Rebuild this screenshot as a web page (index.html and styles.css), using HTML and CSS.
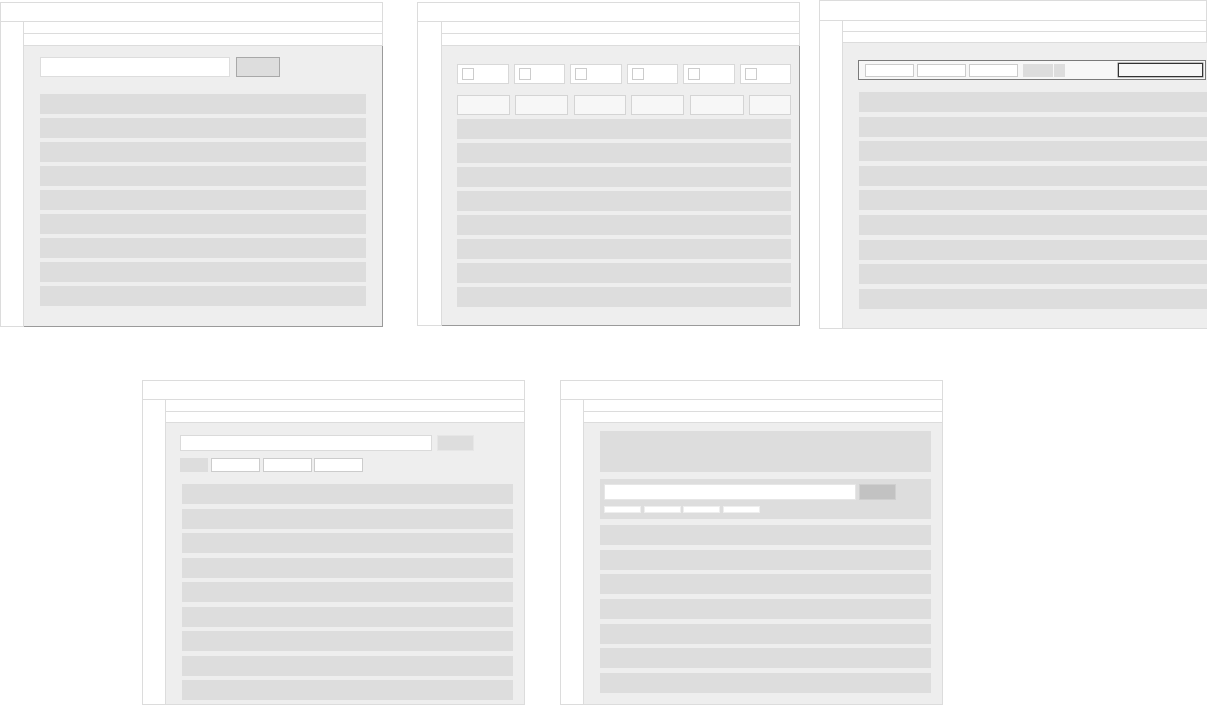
FILE: index.html
```html
<!DOCTYPE html>
<html>
<head>
<meta charset="utf-8">
<title>Wireframes</title>
<link rel="stylesheet" href="styles.css">
</head>
<body>
<div class="page">
  <div class="row-top">
    <!-- Frame 1 -->
    <div class="frame f1">
      <div class="hdr"></div>
      <div class="body">
        <div class="side"></div>
        <div class="main">
          <div class="sub"></div>
          <div class="sub"></div>
          <div class="content c1">
            <div class="search1">
              <div class="input1"></div>
              <div class="btn1"></div>
            </div>
            <div class="rows r1">
              <div class="r"></div><div class="r"></div><div class="r"></div>
              <div class="r"></div><div class="r"></div><div class="r"></div>
              <div class="r"></div><div class="r"></div><div class="r"></div>
            </div>
          </div>
        </div>
      </div>
    </div>
    <!-- Frame 2 -->
    <div class="frame f2">
      <div class="hdr"></div>
      <div class="body">
        <div class="side side2"></div>
        <div class="main">
          <div class="sub"></div>
          <div class="sub"></div>
          <div class="content c2">
            <div class="checks">
              <div class="chk"><span class="box"></span></div>
              <div class="chk"><span class="box"></span></div>
              <div class="chk"><span class="box"></span></div>
              <div class="chk"><span class="box"></span></div>
              <div class="chk"><span class="box"></span></div>
              <div class="chk"><span class="box"></span></div>
            </div>
            <div class="thead">
              <div class="th w53"></div>
              <div class="th w53"></div>
              <div class="th w52"></div>
              <div class="th w53"></div>
              <div class="th w54"></div>
              <div class="th w42"></div>
            </div>
            <div class="rows r2">
              <div class="r"></div><div class="r"></div><div class="r"></div><div class="r"></div>
              <div class="r"></div><div class="r"></div><div class="r"></div><div class="r"></div>
            </div>
          </div>
        </div>
      </div>
    </div>
    <!-- Frame 3 -->
    <div class="frame f3">
      <div class="hdr"></div>
      <div class="body">
        <div class="side"></div>
        <div class="main">
          <div class="sub"></div>
          <div class="sub"></div>
          <div class="content c3">
            <div class="toolbar">
              <div class="tb-in"></div>
              <div class="tb-in"></div>
              <div class="tb-in"></div>
              <div class="tb-gray"></div>
              <div class="tb-gray-sm"></div>
              <div class="tb-box"></div>
            </div>
            <div class="rows r3">
              <div class="r"></div><div class="r"></div><div class="r"></div>
              <div class="r"></div><div class="r"></div><div class="r"></div>
              <div class="r"></div><div class="r"></div><div class="r"></div>
            </div>
          </div>
        </div>
      </div>
    </div>
  </div>

  <div class="row-bottom">
    <!-- Frame 4 -->
    <div class="frame f4">
      <div class="hdr"></div>
      <div class="body">
        <div class="side"></div>
        <div class="main">
          <div class="sub"></div>
          <div class="sub sub-b"></div>
          <div class="content c4">
            <div class="search4">
              <div class="input4"></div>
              <div class="btn4"></div>
            </div>
            <div class="tabs">
              <div class="tab-gray"></div>
              <div class="tab"></div>
              <div class="tab"></div>
              <div class="tab"></div>
            </div>
            <div class="rows r4">
              <div class="r"></div><div class="r"></div><div class="r"></div>
              <div class="r"></div><div class="r"></div><div class="r"></div>
              <div class="r"></div><div class="r"></div><div class="r"></div>
            </div>
          </div>
        </div>
      </div>
    </div>
    <!-- Frame 5 -->
    <div class="frame f5">
      <div class="hdr"></div>
      <div class="body">
        <div class="side"></div>
        <div class="main">
          <div class="sub"></div>
          <div class="sub sub-b"></div>
          <div class="content c5">
            <div class="banner"></div>
            <div class="panel">
              <div class="panel-search">
                <div class="input5"></div>
                <div class="btn5"></div>
              </div>
              <div class="chips">
                <div class="chip"></div>
                <div class="chip"></div>
                <div class="chip"></div>
                <div class="chip"></div>
              </div>
            </div>
            <div class="rows r5">
              <div class="r"></div><div class="r"></div><div class="r"></div>
              <div class="r"></div><div class="r"></div><div class="r"></div>
              <div class="r"></div>
            </div>
          </div>
        </div>
      </div>
    </div>
  </div>
</div>
</body>
</html>
```

FILE: styles.css
```css
* { box-sizing: border-box; }

html, body {
  margin: 0;
  padding: 0;
  background: #ffffff;
  font-family: "Liberation Sans", Arial, sans-serif;
}

.page {
  width: 1207px;
  height: 706px;
  overflow: hidden;
}

.row-top {
  display: flex;
  align-items: flex-start;
  height: 329px;
}

.row-bottom {
  display: flex;
  align-items: flex-start;
  margin-top: 51px;
  padding-left: 142px;
  gap: 35px;
}

/* frame skeleton */
.frame {
  display: flex;
  flex-direction: column;
  flex: none;
}

.f1 { width: 383px; height: 325px; margin-top: 2px; }
.f2 { width: 383px; height: 324px; margin-top: 2px; margin-left: 34px; }
.f3 { width: 388px; height: 329px; margin-left: 19px; }
.f4 { width: 383px; height: 325px; }
.f5 { width: 383px; height: 325px; }

.hdr {
  height: 20px;
  flex: none;
  background: #fff;
  border: 1px solid #dcdcdc;
}
.f3 .hdr { height: 21px; }

.body {
  flex: 1;
  display: flex;
  min-height: 0;
}

.side {
  width: 24px;
  flex: none;
  background: #fff;
  border: 1px solid #dcdcdc;
  border-top: none;
}
.side2 { width: 25px; }

.main {
  flex: 1;
  display: flex;
  flex-direction: column;
  min-width: 0;
}

.sub {
  height: 12px;
  flex: none;
  background: #fff;
  border: 1px solid #dcdcdc;
  border-top: none;
  border-left: none;
}
.f3 .sub { height: 11px; }
.sub-b { height: 11px; }

.content {
  flex: 1;
  background: #eeeeee;
  min-height: 0;
  overflow: hidden;
  border-right: 1px solid #dcdcdc;
  border-bottom: 1px solid #dcdcdc;
}

.c1, .c2 {
  border-right: 1px solid #9a9a9a;
  border-bottom: 1px solid #9a9a9a;
}

/* list rows */
.rows {
  display: flex;
  flex-direction: column;
}
.r {
  height: 20px;
  flex: none;
  background: #dddddd;
}

/* ---------- Frame 1 ---------- */
.c1 { padding: 11px 16px 0 16px; }
.search1 { display: flex; gap: 6px; }
.input1 {
  width: 190px;
  height: 20px;
  background: #fff;
  border: 1px solid #dddddd;
}
.btn1 {
  width: 44px;
  height: 20px;
  background: #dddddd;
  border: 1px solid #a8a8a8;
}
.r1 { margin-top: 17px; gap: 4px; width: 326px; }

/* ---------- Frame 2 ---------- */
.c2 { padding: 18px 0 0 15px; }
.checks {
  display: grid;
  grid-template-columns: repeat(6, 1fr);
  column-gap: 5px;
  width: 334px;
}
.chk {
  height: 20px;
  background: #fff;
  border: 1px solid #d8d8d8;
  display: flex;
  align-items: center;
  padding-left: 4px;
}
.box {
  width: 12px;
  height: 12px;
  border: 1px solid #cccccc;
  background: #fff;
}
.thead {
  display: flex;
  justify-content: space-between;
  width: 334px;
  margin-top: 11px;
}
.th {
  height: 20px;
  background: #f7f7f7;
  border: 1px solid #d4d4d4;
}
.w53 { width: 53px; }
.w52 { width: 52px; }
.w54 { width: 54px; }
.w42 { width: 42px; }
.r2 { margin-top: 4px; gap: 4px; width: 334px; }

/* ---------- Frame 3 ---------- */
.c3 { padding: 17px 0 0 15px; border-right: none; }
.toolbar {
  display: flex;
  align-items: center;
  width: 348px;
  height: 20px;
  background: #f7f7f7;
  border: 1px solid #7a7a7a;
  padding-left: 6px;
  padding-right: 2px;
}
.tb-in {
  width: 49px;
  height: 13px;
  background: #fff;
  border: 1px solid #cccccc;
  margin-right: 3px;
}
.tb-in:nth-child(3) { margin-right: 5px; }
.tb-gray {
  width: 30px;
  height: 13px;
  background: #dddddd;
  margin-right: 1px;
}
.tb-gray-sm {
  width: 11px;
  height: 13px;
  background: #dddddd;
}
.tb-box {
  width: 85px;
  height: 14px;
  margin-left: auto;
  background: #f7f7f7;
  border: 1px solid #333333;
  box-shadow: 0 0 0 0.5px #888888;
}
.r3 { margin-top: 12px; gap: 4.6px; width: 349px; margin-left: 1px; }

/* ---------- Frame 4 ---------- */
.c4 { padding: 12px 0 0 14px; }
.search4 { display: flex; gap: 5px; }
.input4 {
  width: 252px;
  height: 16px;
  background: #fff;
  border: 1px solid #dadada;
}
.btn4 {
  width: 37px;
  height: 16px;
  background: #dddddd;
  border: 1px solid #e6e6e6;
}
.tabs {
  display: flex;
  margin-top: 7px;
  height: 14px;
}
.tab-gray {
  width: 28px;
  height: 14px;
  background: #dddddd;
  margin-right: 3px;
}
.tab {
  width: 49px;
  height: 14px;
  background: #fff;
  border: 1px solid #cccccc;
  margin-right: 2.5px;
}
.r4 { margin-top: 12px; margin-left: 2px; gap: 4.5px; width: 331px; }

/* ---------- Frame 5 ---------- */
.c5 { padding: 8px 0 0 16px; }
.banner {
  width: 331px;
  height: 41px;
  background: #dddddd;
}
.panel {
  width: 331px;
  height: 40px;
  margin-top: 7px;
  background: #dddddd;
  padding: 5px 0 0 4px;
}
.panel-search { display: flex; gap: 3px; }
.input5 {
  width: 252px;
  height: 16px;
  background: #fff;
  border: 1px solid #e6e6e6;
}
.btn5 {
  width: 37px;
  height: 16px;
  background: #c2c2c2;
  border: 1px solid #cfcfcf;
}
.chips {
  display: flex;
  gap: 2.5px;
  margin-top: 6px;
}
.chip {
  width: 37px;
  height: 7px;
  background: #fff;
  border: 1px solid #eeeeee;
}
.r5 { margin-top: 6px; gap: 4.67px; width: 331px; }
```
